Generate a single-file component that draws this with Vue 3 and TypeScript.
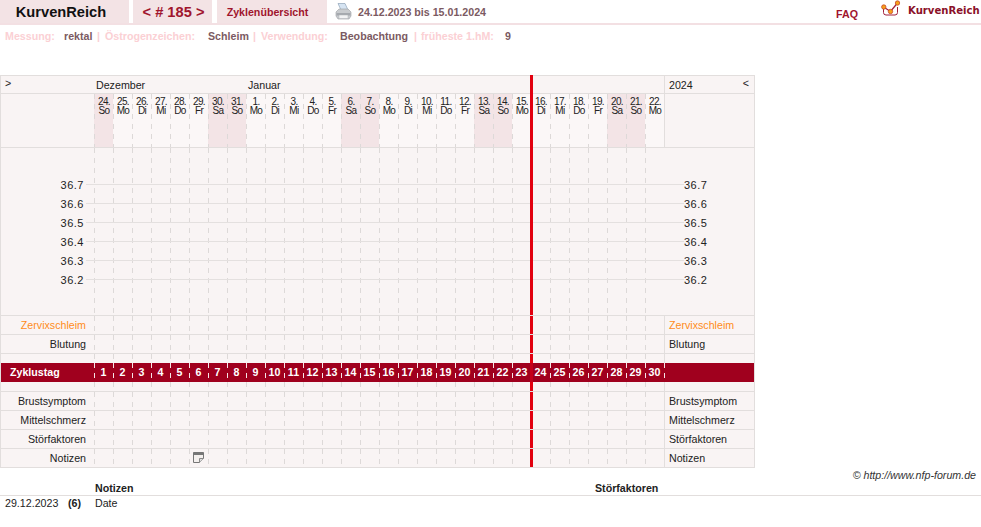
<script setup lang="ts">
const dows = ['So', 'Mo', 'Di', 'Mi', 'Do', 'Fr', 'Sa']
const days = Array.from({ length: 30 }, (_, i) => {
  const d = new Date(Date.UTC(2023, 11, 24 + i))
  return {
    date: d.getUTCDate(),
    dow: dows[d.getUTCDay()],
    weekend: d.getUTCDay() === 0 || d.getUTCDay() === 6,
    cycle: i + 1,
  }
})
const ticks = ['36.7', '36.6', '36.5', '36.4', '36.3', '36.2']
const topRows = [
  { label: 'Zervixschleim', accent: true },
  { label: 'Blutung', accent: false },
]
const bottomRows = ['Brustsymptom', 'Mittelschmerz', 'Störfaktoren', 'Notizen']
</script>

<template>
  <div class="page">
    <header class="topbar">
      <div class="tab brand">KurvenReich</div>
      <div class="tab cycle">&lt; # 185 &gt;</div>
      <div class="tab overview">Zyklenübersicht</div>
      <svg class="printer" viewBox="0 0 17 17" width="17" height="17">
        <path d="M3 .5h7l3 6.500H6z" fill="#d6e4f2" stroke="#8fa3b8" stroke-width=".7" />
        <path d="M1 9l3-3h9l3 3v4l-2 3H3l-2-3z" fill="#c9cccf" stroke="#9a9ea3" stroke-width=".6" />
        <path d="M1.500 10h14v2.500h-14z" fill="#a5a9ae" />
        <path d="M4 12h9v3.500H4z" fill="#f2f3f4" stroke="#aeb2b6" stroke-width=".5" />
      </svg>
      <div class="range">24.12.2023 bis 15.01.2024</div>
      <div class="spacer"></div>
      <div class="faq">FAQ</div>
      <svg class="logo" viewBox="0 0 20 19" width="20" height="19">
        <path d="M2.500 7v5.500q0 2.500 2.500 2.500h9q2.500 0 2.500-2.500V7" fill="none" stroke="#a0203c" stroke-width="1" />
        <path d="M2.500 7l7 4.500 7-8.500" fill="none" stroke="#a0203c" stroke-width="1.300" />
        <circle cx="2.800" cy="7" r="2.200" fill="#f6a21a" stroke="#c8452a" stroke-width=".8" />
        <circle cx="9.500" cy="11.500" r="2.200" fill="#f6a21a" stroke="#c8452a" stroke-width=".8" />
        <circle cx="16.500" cy="3" r="2.200" fill="#f6a21a" stroke="#c8452a" stroke-width=".8" />
      </svg>
      <div class="logo-text">KurvenReich</div>
    </header>

    <div class="meta">
      <span class="k m1">Messung:</span><span class="v m2">rektal</span><span class="k m3">|</span><span class="k m4">Östrogenzeichen:</span><span class="v m5">Schleim</span><span class="k m6">|</span><span class="k m7">Verwendung:</span><span class="v m8">Beobachtung</span><span class="k m9">|</span><span class="k m10">früheste 1.hM:</span><span class="v">9</span>
    </div>

    <section class="table">
      <div class="today"></div>

      <div class="row months">
        <div class="side left-arrow">&gt;</div>
        <div class="month-cells">
          <div class="month dec">Dezember</div>
          <div class="month">Januar</div>
        </div>
        <div class="side right year"><span>2024</span><span class="arrow">&lt;</span></div>
      </div>

      <div class="row head">
        <div class="side"></div>
        <div class="cells">
          <div v-for="d in days" :key="d.cycle" class="cell day" :class="{ weekend: d.weekend }">
            <span class="day-line">{{ d.date }}.</span><span class="day-line">{{ d.dow }}</span>
          </div>
        </div>
        <div class="side right"></div>
      </div>

      <div class="chart">
        <div class="cells overlay">
          <div v-for="d in days" :key="d.cycle" class="cell"></div>
        </div>
        <div class="ticks">
          <div v-for="t in ticks" :key="t" class="tick">
            <span class="tick-left">{{ t }}</span>
            <span class="tick-line"></span>
            <span class="tick-right">{{ t }}</span>
          </div>
        </div>
      </div>

      <div v-for="(r, i) in topRows" :key="r.label" class="row data lower" :class="{ first: i === 0 }">
        <div class="side label" :class="{ accent: r.accent }">{{ r.label }}</div>
        <div class="cells"><div v-for="d in days" :key="d.cycle" class="cell"></div></div>
        <div class="side right" :class="{ accent: r.accent }">{{ r.label }}</div>
      </div>

      <div class="gap short lower">
        <div class="side"></div>
        <div class="cells"><div v-for="d in days" :key="d.cycle" class="cell"></div></div>
        <div class="side right"></div>
      </div>

      <div class="band lower">
        <div class="band-label">Zyklustag</div>
        <div class="cells">
          <div v-for="d in days" :key="d.cycle" class="cell band-cell">{{ d.cycle }}</div>
        </div>
        <div class="band-end"></div>
        <div class="band-today"></div>
      </div>

      <div class="row gap tall lower">
        <div class="side"></div>
        <div class="cells"><div v-for="d in days" :key="d.cycle" class="cell"></div></div>
        <div class="side right"></div>
      </div>

      <div v-for="r in bottomRows" :key="r" class="row data lower">
        <div class="side label">{{ r }}</div>
        <div class="cells">
          <div v-for="d in days" :key="d.cycle" class="cell">
            <svg v-if="r === 'Notizen' && d.cycle === 6" class="note" viewBox="0 0 11 11" width="11" height="11">
              <path d="M.5.500h10v6l-4 4h-6z" fill="#f4f0ee" stroke="#777" />
              <path d="M.5.500h10v2.500H.5z" fill="#777" />
              <path d="M6.500 10.500v-4h4" fill="#ddd" stroke="#888" />
            </svg>
          </div>
        </div>
        <div class="side right">{{ r }}</div>
      </div>
    </section>

    <div class="copyright">© http://www.nfp-forum.de</div>

    <section class="notes">
      <div class="notes-head">
        <span class="nh-a">Notizen</span>
        <span>Störfaktoren</span>
      </div>
      <div class="notes-row">
        <span class="n-date">29.12.2023</span>
        <b class="n-day">(6)</b>
        <span>Date</span>
      </div>
    </section>
  </div>
</template>

<style>
html,
body {
  margin: 0;
  background: #fff;
}
</style>

<style scoped>
.page {
  width: 981px;
  height: 527px;
  overflow: hidden;
  font-family: 'Liberation Sans', Arial, sans-serif;
  font-size: 10.670px;
  color: #222;
}
.topbar {
  display: flex;
  align-items: stretch;
  height: 23px;
  border-bottom: 2px solid #f3e0e3;
}
.tab {
  display: flex;
  align-items: center;
  justify-content: center;
  background: #f3e3e5;
  font-weight: bold;
  color: #a0152d;
}
.brand {
  box-sizing: border-box;
  width: 129px;
  margin-right: 4px;
  padding-right: 7px;
  font-size: 14.670px;
  color: #111;
}
.cycle {
  box-sizing: border-box;
  width: 79px;
  margin-right: 5px;
  padding-left: 2px;
  font-size: 14.670px;
}
.overview {
  box-sizing: border-box;
  width: 110px;
  margin-right: 8px;
  padding-right: 9px;
}
.printer {
  margin-top: 3px;
}
.range {
  margin-left: 6px;
  line-height: 24px;
  font-weight: bold;
  color: #7b5a62;
}
.spacer {
  flex: 1;
}
.faq {
  margin-top: 7px;
  margin-right: 23px;
  line-height: 14px;
  font-weight: bold;
  color: #a0152d;
}
.logo {
  margin-right: 7px;
}
.logo-text {
  width: 73px;
  font-family: 'DejaVu Sans', sans-serif;
  font-size: 10.100px;
  font-weight: bold;
  line-height: 21px;
  color: #8a1028;
}
.meta {
  display: flex;
  height: 22px;
  padding-left: 5px;
  align-items: center;
  font-weight: bold;
  margin-bottom: 28px;
}
.k {
  color: #fbd0d4;
}
.v {
  color: #7b5a62;
}
.m1 { width: 59px; }
.m2 { width: 33px; }
.m3 { width: 8px; }
.m4 { width: 103px; }
.m5 { width: 45px; }
.m6 { width: 8px; }
.m7 { width: 79px; }
.m8 { width: 74px; }
.m9 { width: 7px; }
.m10 { width: 84px; }
.table {
  position: relative;
  box-sizing: border-box;
  width: 755px;
  border: 1px solid #e2dedd;
  border-bottom: 0;
  background: #f9f4f4;
}
.today {
  position: absolute;
  z-index: 1;
  left: 529px;
  top: -1px;
  bottom: 0;
  width: 3px;
  background: #e2000f;
}
.lower {
  position: relative;
  z-index: 2;
}
.lower .cell:nth-child(24) {
  background: none;
}
.row {
  display: flex;
  box-sizing: border-box;
  border-bottom: 1px solid #e2dedd;
}
.side {
  box-sizing: border-box;
  width: 93px;
  flex: none;
}
.right {
  width: 90px;
  padding-left: 4px;
  border-left: 1px solid #e2dedd;
  text-align: left;
}
.cells {
  display: flex;
  width: 570px;
  flex: none;
}
.cell {
  position: relative;
  box-sizing: border-box;
  width: 19px;
  flex: none;
  background: repeating-linear-gradient(to bottom, #ddd9d8 0 5px, transparent 5px 10px) left top / 1px 100% no-repeat;
}
.months {
  height: 18px;
  line-height: 18px;
}
.left-arrow {
  padding-left: 4px;
  line-height: 14px;
}
.month-cells {
  display: flex;
  width: 570px;
  flex: none;
}
.month {
  padding-left: 2px;
}
.dec {
  width: 150px;
}
.year {
  display: flex;
  justify-content: space-between;
  padding-right: 5px;
}
.arrow {
  line-height: 14px;
}
.head {
  height: 54px;
}
.day {
  display: flex;
  flex-direction: column;
  align-items: center;
  padding: 3px 0 0 1px;
  background-color: #fbf7f7;
  font-size: 10px;
  line-height: 9px;
  letter-spacing: -0.600px;
}
.day-line {
  display: block;
  height: 9px;
  overflow: visible;
}
.weekend {
  background-color: #f3e4e6;
}
.chart {
  position: relative;
  height: 167px;
  padding-top: 27px;
  box-sizing: border-box;
}
.overlay {
  position: absolute;
  left: 93px;
  top: 0;
  bottom: 0;
}
.ticks {
  position: relative;
  width: 100%;
}
.tick {
  display: flex;
  align-items: center;
  height: 19px;
  font-size: 11px;
  letter-spacing: 0.500px;
}
.tick-left {
  box-sizing: border-box;
  width: 83px;
  margin-right: 2px;
  text-align: right;
}
.tick-line {
  flex: 1;
  height: 1px;
  background: #e4e0df;
}
.tick-right {
  width: 70px;
}
.data {
  height: 19px;
  line-height: 18px;
}
.first {
  height: 20px;
  border-top: 1px solid #e2dedd;
}
.label {
  padding-right: 8px;
  text-align: right;
}
.accent {
  color: #ff8c1a;
}
.gap {
  display: flex;
}
.short {
  height: 9px;
}
.tall {
  height: 10px;
}
.band {
  display: flex;
  height: 19px;
  background: #a0001e;
  color: #fff;
  font-weight: bold;
  line-height: 19px;
}
.band-label {
  box-sizing: border-box;
  width: 93px;
  flex: none;
  padding-left: 9px;
}
.band-cell {
  text-align: center;
  background: repeating-linear-gradient(to bottom, #f6e4e6 0 5px, transparent 5px 10px) left top / 1px 100% no-repeat;
}
.band-end {
  flex: 1;
  background: repeating-linear-gradient(to bottom, #f6e4e6 0 5px, transparent 5px 10px) left top / 1px 100% no-repeat;
}
.band-today {
  position: absolute;
  left: 529px;
  top: 0;
  bottom: 0;
  width: 3px;
  background: #c4001a;
}
.note {
  display: block;
  margin: 3px 0 0 4px;
}
.copyright {
  width: 976px;
  line-height: 14px;
  text-align: right;
  font-style: italic;
  color: #333;
}
.notes-head {
  display: flex;
  height: 13px;
  padding-left: 95px;
  line-height: 12px;
  border-bottom: 1px solid #e2dedd;
  font-weight: bold;
}
.nh-a {
  width: 500px;
}
.notes-row {
  display: flex;
  padding-left: 5px;
  line-height: 14px;
}
.n-date {
  width: 63px;
}
.n-day {
  width: 27px;
}
</style>
